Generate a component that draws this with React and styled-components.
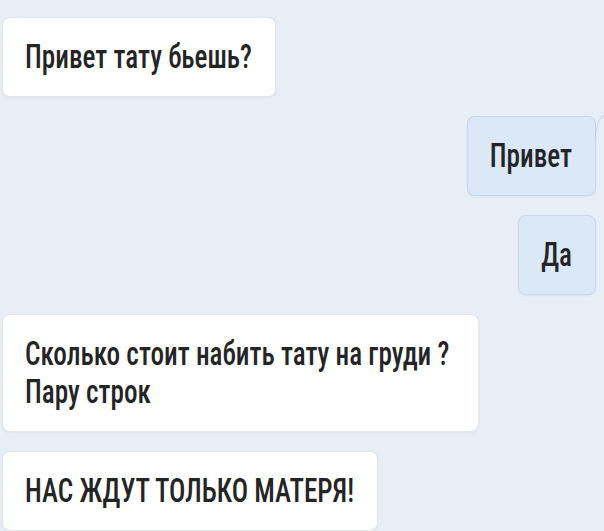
import React from "react";
import styled, { createGlobalStyle } from "styled-components";

const Global = createGlobalStyle`
  html, body { margin: 0; padding: 0; background: #e8eef5; overflow: hidden; }
  #root { min-height: 531px; }
`;

const Chat = styled.div`
  display: flex;
  flex-direction: column;
  gap: 19px;
  padding: 17px 8px 0 2px;
  font-family: "Roboto Condensed", "Roboto", sans-serif;
  font-stretch: 75%;
`;

const Row = styled.div`
  display: flex;
  justify-content: ${(p) => (p.$out ? "flex-end" : "flex-start")};
`;

const Bubble = styled.div`
  position: relative;
  box-sizing: border-box;
  padding: 20px ${(p) => p.$padRight || 23}px 20px 22px;
  border-radius: 8px;
  background: ${(p) => (p.$out ? "#dae8f8" : "#ffffff")};
  border: 1px solid ${(p) => (p.$out ? "rgba(160,185,215,0.35)" : "rgba(190,200,215,0.45)")};
  box-shadow: 0 1px 2px rgba(90, 110, 140, 0.08);
  color: #242426;
  font-size: 27.2px;
  font-weight: 500;
  line-height: 38px;
  white-space: nowrap;
`;

const Line = styled.div`
  transform: scaleY(1.19);
  transform-origin: 50% 50%;
`;

const Tail = styled.div`
  position: absolute;
  top: -2px;
  right: -11px;
  width: 10px;
  height: 24px;
  border-top-left-radius: 10px 24px;
  border-left: 1px solid rgba(180, 195, 215, 0.6);
  border-top: 1px solid rgba(180, 195, 215, 0.6);
`;

const messages = [
  { out: false, lines: ["Привет тату бьешь?"] },
  { out: true, lines: ["Привет"], tail: true },
  { out: true, lines: ["Да"] },
  { out: false, lines: ["Сколько стоит набить тату на груди ?", "Пару строк"], padRight: 29 },
  { out: false, lines: ["НАС ЖДУТ ТОЛЬКО МАТЕРЯ!"] },
];

export default function App() {
  return (
    <>
      <Global />
      <Chat>
        {messages.map((m, i) => (
          <Row key={i} $out={m.out}>
            <Bubble $out={m.out} $padRight={m.padRight}>
              {m.lines.map((l, j) => (
                <Line key={j}>{l}</Line>
              ))}
              {m.tail && <Tail />}
            </Bubble>
          </Row>
        ))}
      </Chat>
    </>
  );
}
